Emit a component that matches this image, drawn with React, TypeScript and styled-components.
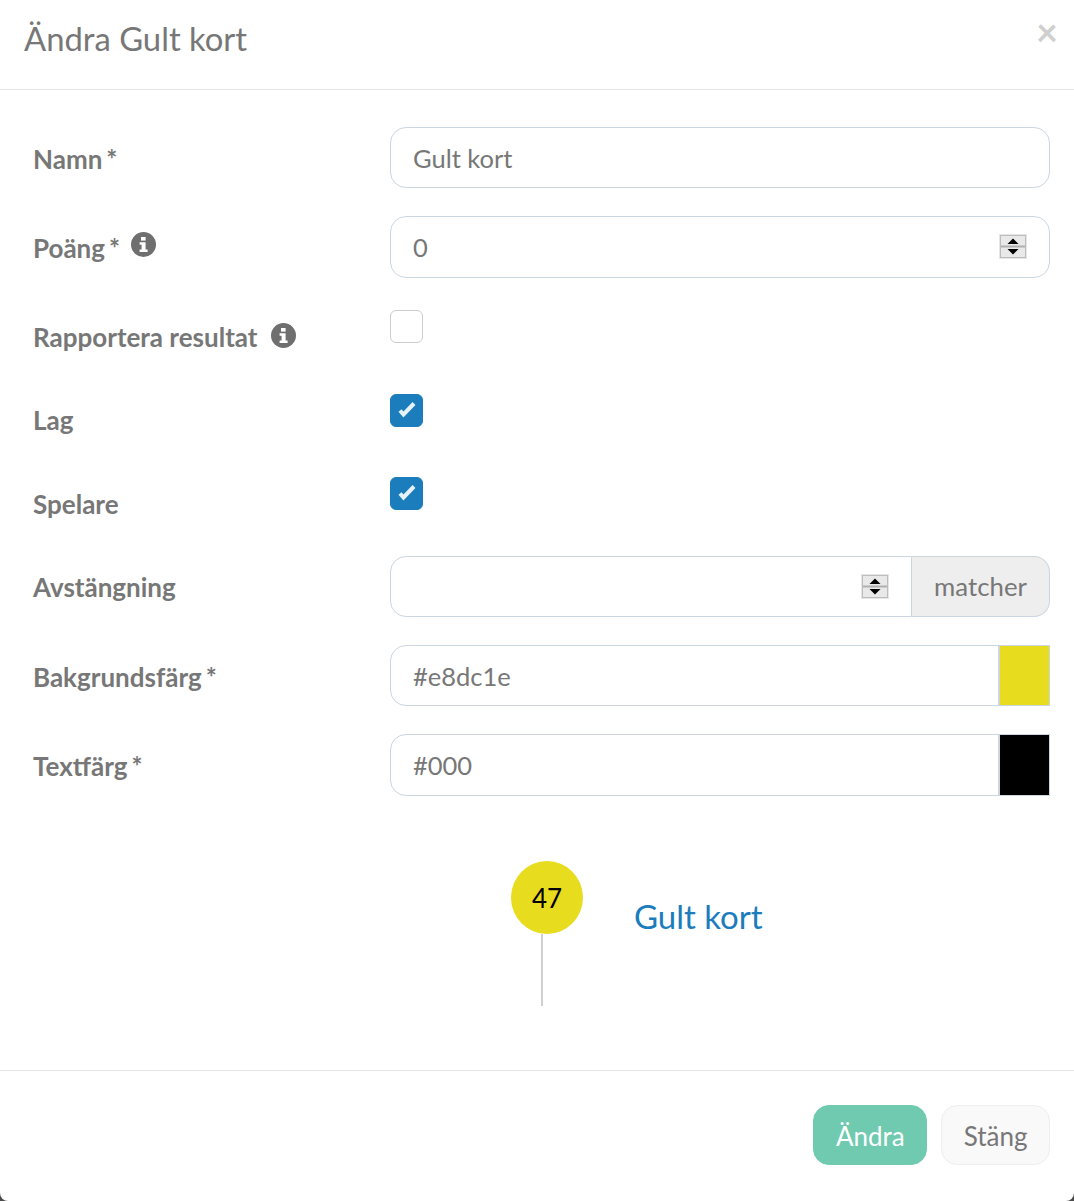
import React from 'react';
import styled, { createGlobalStyle } from 'styled-components';

const GlobalStyle = createGlobalStyle`
  html, body {
    margin: 0;
    padding: 0;
    height: 1201px;
    overflow: hidden;
    background: #4a4a4a;
  }
  * {
    box-sizing: border-box;
  }
`;

const Modal = styled.div`
  width: 1074px;
  height: 1201px;
  display: flex;
  flex-direction: column;
  background: #fff;
  border-radius: 0 0 8px 8px;
  color: #777;
  font-family: Lato, 'Open Sans', sans-serif;
  font-size: 26px;
`;

const ModalHeader = styled.header`
  position: relative;
  height: 90px;
  flex: none;
  padding: 18px 24px 0;
  border-bottom: 1px solid #e5e5e5;
`;

const Title = styled.h4`
  margin: 0;
  font-size: 32.8px;
  font-weight: 400;
  line-height: 42px;
  color: #777;
`;

const CloseButton = styled.span`
  position: absolute;
  top: 11px;
  right: 16px;
  font-size: 38px;
  line-height: 40px;
  font-weight: 700;
  color: #cfcfcf;
`;

const ModalBody = styled.div`
  flex: 1;
  padding: 37px 24px 0 33px;
`;

const FormRow = styled.div<{ $height: number }>`
  display: grid;
  grid-template-columns: 357px 660px;
  align-items: start;
  height: ${(p) => p.$height}px;
`;

const Label = styled.label<{ $height?: number }>`
  display: flex;
  align-items: center;
  gap: 13px;
  height: ${(p) => p.$height ?? 63}px;
  font-size: 26px;
  font-weight: 700;
  color: #777;
  white-space: nowrap;
`;

const Required = styled.span`
  margin: 0 -2px 0 4px;
  font-weight: 700;
`;

const InfoIcon = styled.svg`
  width: 25px;
  height: 25px;
  flex: none;
  margin-top: -6px;
`;

const InputWrap = styled.div`
  position: relative;
  display: flex;
  width: 660px;
  height: 61.3px;
`;

const TextInput = styled.input<{ $flatRight?: boolean }>`
  flex: 1;
  min-width: 0;
  height: 61.3px;
  padding: 0.5px 22px 0;
  border: 1px solid #ccd6e0;
  border-radius: ${(p) => (p.$flatRight ? '16px 0 0 16px' : '16px')};
  background: #fff;
  color: #777;
  font-family: inherit;
  font-size: 25.5px;
  outline: none;
`;

const Addon = styled.span`
  width: 138px;
  flex: none;
  display: flex;
  align-items: center;
  justify-content: center;
  padding-bottom: 1px;
  border: 1px solid #ccd6e0;
  border-left: 0;
  border-radius: 0 16px 16px 0;
  background: #eee;
  color: #777;
  font-size: 25.8px;
`;

const ColorSwatch = styled.span<{ $color: string }>`
  width: 52px;
  flex: none;
  border: 1px solid #ccd6e0;
  border-left: 2px solid #ccd6e0;
  margin-left: -1px;
  background: ${(p) => p.$color};
`;

const Spinner = styled.svg<{ $right: number }>`
  position: absolute;
  top: 18px;
  right: ${(p) => p.$right}px;
  width: 28px;
  height: 25px;
`;

const CheckBox = styled.span<{ $checked?: boolean }>`
  display: flex;
  align-items: center;
  justify-content: center;
  width: 33px;
  height: 33px;
  border-radius: 6px;
  border: 1px solid ${(p) => (p.$checked ? '#1b7dbb' : '#ccc')};
  background: ${(p) => (p.$checked ? '#1b7dbb' : '#fff')};
`;

const CheckLabel = styled(Label)<{ $shift: number }>`
  margin-top: ${(p) => p.$shift}px;
  gap: 14px;

  svg {
    margin-top: -4px;
  }
`;

const Preview = styled.div`
  display: flex;
  align-items: flex-start;
  margin: 66px 0 0 478px;
`;

const PinColumn = styled.div`
  width: 123px;
  flex: none;
`;

const PinHead = styled.div`
  width: 72px;
  height: 73px;
  padding-top: 1px;
  display: flex;
  align-items: center;
  justify-content: center;
  border-radius: 50%;
  background: #e8dc1e;
  color: #000;
  font-size: 26px;
`;

const PinStem = styled.div`
  width: 2px;
  height: 72px;
  margin-left: 30px;
  background: #d0d0d0;
`;

const PreviewName = styled.span`
  margin-top: 33px;
  font-size: 33px;
  line-height: 44px;
  color: #1b7dbb;
`;

const ModalFooter = styled.footer`
  height: 131px;
  flex: none;
  display: flex;
  justify-content: flex-end;
  gap: 14px;
  padding: 34px 24px 0 0;
  border-top: 1px solid #e5e5e5;
`;

const Button = styled.button<{ $primary?: boolean }>`
  height: 60px;
  padding: 1px 21.5px 0;
  border-radius: 16px;
  border: 1px solid ${(p) => (p.$primary ? '#6fcab0' : '#eee')};
  background: ${(p) => (p.$primary ? '#6fcab0' : '#f9f9f9')};
  color: ${(p) => (p.$primary ? '#fff' : '#777')};
  font-family: inherit;
  font-size: 26px;
`;

const Info = () => (
  <InfoIcon viewBox="0 0 25 25">
    <circle cx="12.5" cy="12.5" r="12.5" fill="#6f6f6f" />
    <rect x="10" y="5" width="4.6" height="3.6" fill="#fff" />
    <path d="M8.6 10.2h6v7.2h2V20H8.6v-2.6h2v-4.6h-2z" fill="#fff" />
  </InfoIcon>
);

const Spin = ({ right }: { right: number }) => (
  <Spinner $right={right} viewBox="0 0 28 25">
    <rect x="0.5" y="0.5" width="27" height="24" fill="#f0f0f0" stroke="#e6e6e6" />
    <rect x="1.5" y="1.5" width="25" height="22" fill="#e9e9e9" stroke="#bdbdbd" />
    <rect x="2" y="11.5" width="24" height="2" fill="#b0b0b0" />
    <path d="M14 4.5l5.5 5.5h-11z" fill="#000" />
    <path d="M14 20.5l5.5-5.5h-11z" fill="#000" />
  </Spinner>
);

const Check = () => (
  <svg width="20" height="18" viewBox="0 0 20 18">
    <path d="M3 9.5l3.5 4L17 2.5" fill="none" stroke="#e6f2fa" strokeWidth="4" />
  </svg>
);

const App: React.FC = () => {
  return (
    <>
      <GlobalStyle />
      <Modal>
        <ModalHeader>
          <Title>Ändra Gult kort</Title>
          <CloseButton>×</CloseButton>
        </ModalHeader>

        <ModalBody>
          <FormRow $height={89.4}>
            <Label>
              <span>Namn<Required>*</Required></span>
            </Label>
            <InputWrap>
              <TextInput defaultValue="Gult kort" />
            </InputWrap>
          </FormRow>

          <FormRow $height={93.6}>
            <Label>
              <span>Poäng<Required>*</Required></span>
              <Info />
            </Label>
            <InputWrap>
              <TextInput defaultValue="0" />
              <Spin right={23} />
            </InputWrap>
          </FormRow>

          <FormRow $height={84}>
            <CheckLabel $shift={-4}>
              <span>Rapportera resultat</span>
              <Info />
            </CheckLabel>
            <CheckBox />
          </FormRow>

          <FormRow $height={83}>
            <CheckLabel $shift={-5}>Lag</CheckLabel>
            <CheckBox $checked>
              <Check />
            </CheckBox>
          </FormRow>

          <FormRow $height={79}>
            <CheckLabel $shift={-4}>Spelare</CheckLabel>
            <CheckBox $checked>
              <Check />
            </CheckBox>
          </FormRow>

          <FormRow $height={89}>
            <Label $height={62}>Avstängning</Label>
            <InputWrap>
              <TextInput $flatRight />
              <Addon>matcher</Addon>
              <Spin right={161} />
            </InputWrap>
          </FormRow>

          <FormRow $height={89.4}>
            <Label $height={64}>
              <span>Bakgrundsfärg<Required>*</Required></span>
            </Label>
            <InputWrap>
              <TextInput $flatRight defaultValue="#e8dc1e" />
              <ColorSwatch $color="#e8dc1e" />
            </InputWrap>
          </FormRow>

          <FormRow $height={60.6}>
            <Label>
              <span>Textfärg<Required>*</Required></span>
            </Label>
            <InputWrap>
              <TextInput $flatRight defaultValue="#000" />
              <ColorSwatch $color="#000" />
            </InputWrap>
          </FormRow>

          <Preview>
            <PinColumn>
              <PinHead>47</PinHead>
              <PinStem />
            </PinColumn>
            <PreviewName>Gult kort</PreviewName>
          </Preview>
        </ModalBody>

        <ModalFooter>
          <Button $primary>Ändra</Button>
          <Button>Stäng</Button>
        </ModalFooter>
      </Modal>
    </>
  );
};

export default App;
